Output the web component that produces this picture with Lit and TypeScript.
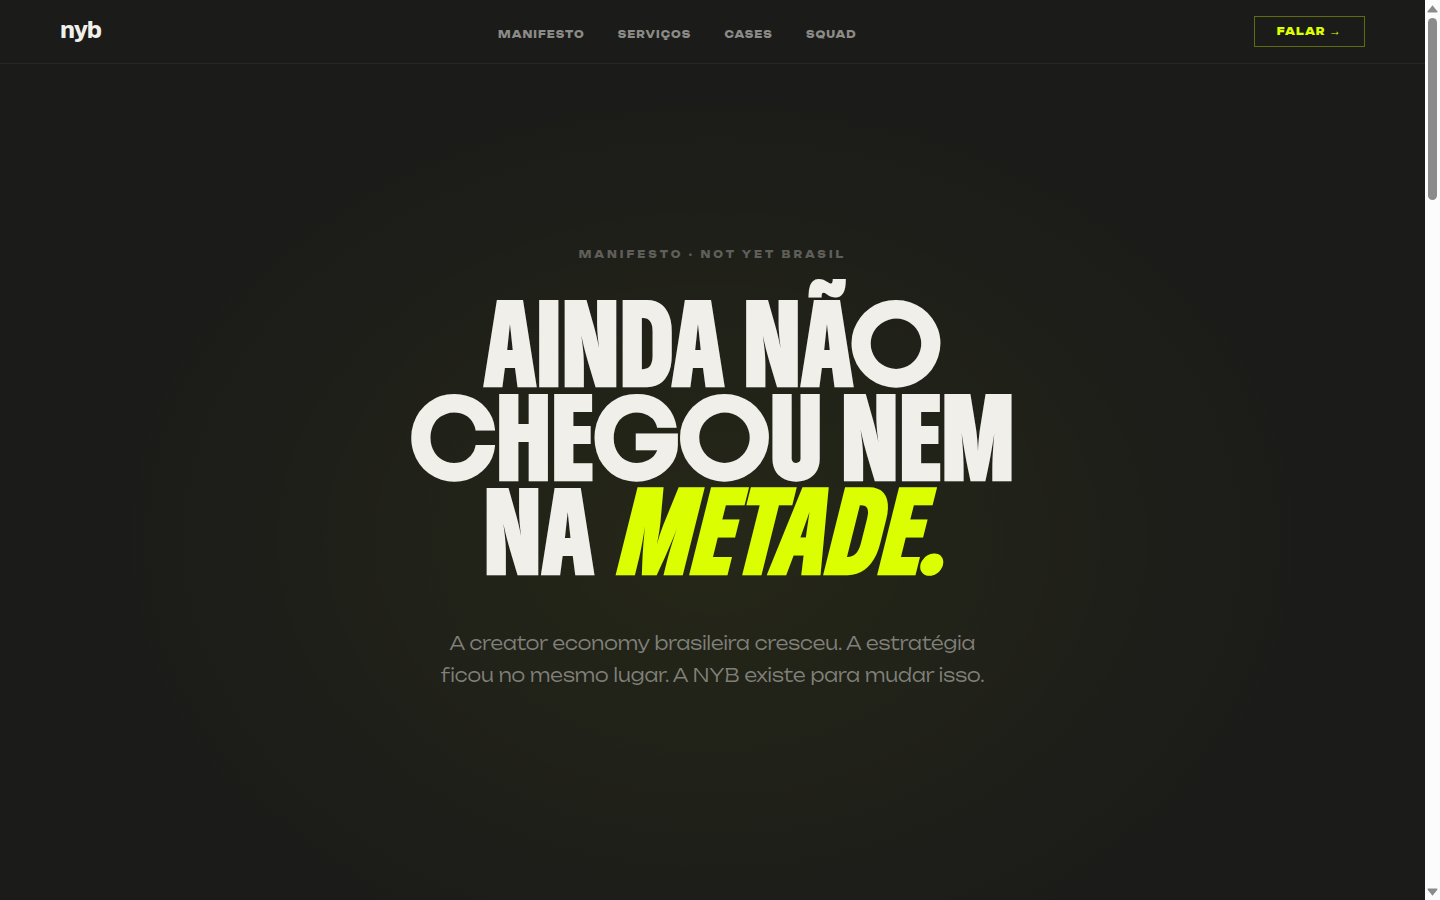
import { LitElement, html, css } from "lit";
import { customElement } from "lit/decorators.js";

const LINKS = [
  { label: "MANIFESTO", href: "#manifesto" },
  { label: "SERVIÇOS", href: "#servicos" },
  { label: "CASES", href: "#cases" },
  { label: "SQUAD", href: "#squad" },
];

@customElement("nyb-header")
export class NybHeader extends LitElement {
  static styles = css`
    :host {
      display: block;
      border-bottom: 1px solid #272725;
      font-family: Unbounded, "DejaVu Sans", sans-serif;
    }
    .bar {
      display: flex;
      align-items: center;
      justify-content: space-between;
      padding: 16px 60px;
    }
    a {
      text-decoration: none;
    }
    .logo {
      padding-bottom: 3px;
      color: #f0efea;
      font: 800 24px/28px Archivo, "Liberation Sans", sans-serif;
      letter-spacing: -1px;
    }
    nav {
      display: flex;
      gap: 33px;
      padding-top: 5px;
    }
    .link {
      color: #8b8b87;
      font-size: 10px;
      line-height: 16px;
      font-weight: 800;
      letter-spacing: 1px;
    }
    .cta {
      padding: 7px 22px;
      border: 1px solid #5c6c0e;
      background: none;
      color: #dbff00;
      font: inherit;
      font-size: 10px;
      line-height: 15px;
      font-weight: 900;
      letter-spacing: 1px;
      cursor: pointer;
    }
    .arrow {
      font-family: "Liberation Sans", sans-serif;
      font-size: 12px;
      line-height: 1;
    }
  `;
  render() {
    return html`
      <header class="bar">
        <a class="logo" href="#">nyb</a>
        <nav>${LINKS.map((l) => html`<a class="link" href=${l.href}>${l.label}</a>`)}</nav>
        <button class="cta" type="button">FALAR <span class="arrow">→</span></button>
      </header>
    `;
  }
}

@customElement("nyb-hero")
export class NybHero extends LitElement {
  static styles = css`
    :host {
      display: flex;
      flex-direction: column;
      align-items: center;
      justify-content: center;
      text-align: center;
      font-family: Unbounded, "DejaVu Sans", sans-serif;
    }
    .eyebrow {
      margin: 0;
      color: #5f5f5a;
      font-size: 10px;
      line-height: 16px;
      font-weight: 800;
      letter-spacing: 3px;
    }
    h1 {
      max-width: 720px;
      margin: 37px 0 46px;
      color: #f0efea;
      font: 700 72px/94px Boldonse, Anton, "Roboto Condensed", sans-serif;
    }
    em {
      color: #dbff00;
    }
    .lead {
      max-width: 560px;
      margin: 0 0 27px;
      color: #80807a;
      font-size: 18px;
      line-height: 32px;
      font-weight: 300;
    }
  `;
  render() {
    return html`
      <p class="eyebrow">MANIFESTO · NOT YET BRASIL</p>
      <h1>AINDA NÃO<br />CHEGOU NEM<br />NA <em>METADE.</em></h1>
      <p class="lead">
        A creator economy brasileira cresceu. A estratégia ficou no mesmo lugar. A NYB existe para mudar isso.
      </p>
    `;
  }
}

@customElement("scroll-rail")
export class ScrollRail extends LitElement {
  static styles = css`
    :host {
      display: flex;
      flex-direction: column;
      align-items: center;
      gap: 5px;
      padding: 5px 0 4px;
      box-sizing: border-box;
      background: #fcfcfc;
    }
    svg {
      width: 11px;
      height: 8px;
      fill: #8b8b8b;
    }
    .track {
      flex: 1;
      width: 9px;
    }
    .thumb {
      height: 21%;
      border-radius: 5px;
      background: #8b8b8b;
    }
  `;
  render() {
    return html`
      <svg viewBox="0 0 11 8"><path d="M5.5 0.3 10.3 6.2Q10.8 7.6 9.6 7.6H1.4Q.2 7.6.7 6.2Z" /></svg>
      <div class="track"><div class="thumb"></div></div>
      <svg viewBox="0 0 11 8"><path d="M5.5 7.7 10.3 1.8Q10.8.4 9.6.4H1.4Q.2.4.7 1.8Z" /></svg>
    `;
  }
}

@customElement("app-root")
export class AppRoot extends LitElement {
  static styles = css`
    :host {
      display: grid;
      grid-template-columns: 1fr 15px;
      min-height: 100vh;
    }
    .page {
      display: flex;
      flex-direction: column;
      background: radial-gradient(ellipse at 50% 60%, rgba(219, 255, 0, 0.055), transparent 60%) #1b1b19;
    }
    nyb-header {
      background: #1b1b19;
    }
    nyb-hero {
      flex: 1;
    }
  `;
  render() {
    return html`
      <div class="page">
        <nyb-header></nyb-header>
        <nyb-hero></nyb-hero>
      </div>
      <scroll-rail></scroll-rail>
    `;
  }
}
